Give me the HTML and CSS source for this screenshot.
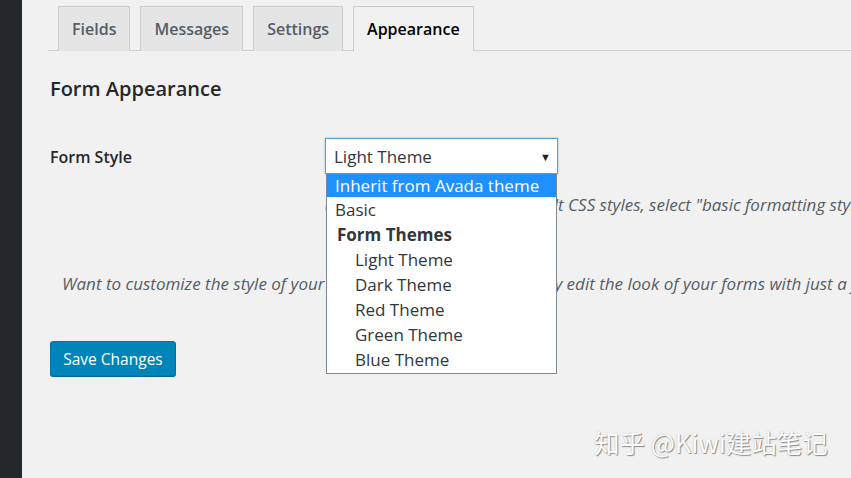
FILE: index.html
```html
<!DOCTYPE html>
<html>
<head>
<meta charset="utf-8">
<link rel="stylesheet" href="styles.css">
</head>
<body>
<div class="page">
  <aside class="sidebar"></aside>
  <main class="main">
    <nav class="tabs">
      <span class="tab">Fields</span>
      <span class="tab">Messages</span>
      <span class="tab">Settings</span>
      <span class="tab active">Appearance</span>
    </nav>
    <h2 class="title">Form Appearance</h2>
    <div class="row">
      <div class="label">Form Style</div>
      <div class="field">
        <div class="select-wrap">
          <div class="select"><span>Light Theme</span><span class="arrow">▼</span></div>
          <ul class="dropdown">
            <li class="opt selected">Inherit from Avada theme</li>
            <li class="opt">Basic</li>
            <li class="group">Form Themes</li>
            <li class="opt sub">Light Theme</li>
            <li class="opt sub">Dark Theme</li>
            <li class="opt sub">Red Theme</li>
            <li class="opt sub">Green Theme</li>
            <li class="opt sub">Blue Theme</li>
          </ul>
        </div>
        <p class="desc">(If you want to avoid the default CSS styles, select "basic formatting styles" from the list.)</p>
      </div>
    </div>
    <p class="note">Want to customize the style of your forms? Try our plugins to easily edit the look of your forms with just a few clicks.</p>
    <button class="save">Save Changes</button>
    <div class="watermark">知乎 @Kiwi建站笔记</div>
  </main>
</div>
</body>
</html>
```
FILE: styles.css
```css
html, body {
  margin: 0;
  padding: 0;
  width: 851px;
  height: 478px;
  overflow: hidden;
  background: #f1f1f1;
  font-family: "Open Sans", "Noto Sans", sans-serif;
  color: #23282d;
}
.page {
  display: flex;
  height: 478px;
}
.sidebar {
  width: 22px;
  flex: none;
  background: #23282d;
}
.main {
  flex: 1;
  padding-left: 26px;
  min-width: 0;
  position: relative;
}
.tabs {
  display: flex;
  gap: 10px;
  padding: 6px 0 0 10px;
  border-bottom: 1px solid #cccccc;
  height: 44px;
}
.tab {
  box-sizing: border-box;
  height: 45px;
  padding: 0 13px;
  border: 1px solid #cccccc;
  border-bottom: none;
  background: #e5e5e5;
  color: #555d66;
  font-size: 16px;
  font-weight: 600;
  line-height: 44px;
}
.tab.active {
  background: #f1f1f1;
  color: #000;
  height: 45px;
  margin-bottom: -1px;
}
.title {
  margin: 24px 0 0 2px;
  font-size: 20px;
  font-weight: 600;
  line-height: 28px;
}
.row {
  display: flex;
  margin-top: 35px;
  padding-left: 2px;
}
.label {
  flex: none;
  width: 275px;
  padding-top: 2px;
  font-size: 16px;
  font-weight: 600;
  line-height: 35px;
}
.field {
  min-width: 0;
}
.select-wrap {
  position: relative;
  width: 233px;
}
.select {
  box-sizing: border-box;
  height: 36px;
  border: 1px solid #5b9dd9;
  background: #fff;
  display: flex;
  justify-content: space-between;
  align-items: center;
  padding: 0 6px 0 8px;
  font-size: 17px;
  color: #32373c;
  box-shadow: 0 0 2px rgba(30,140,190,0.5);
}
.arrow {
  font-size: 11px;
  color: #222;
}
.dropdown {
  position: absolute;
  left: 1px;
  top: 36px;
  width: 231px;
  box-sizing: border-box;
  margin: 0;
  padding: 0;
  list-style: none;
  background: #fff;
  border: 1px solid #7e8993;
  border-top: none;
  height: 200px;
  overflow: hidden;
  z-index: 5;
  font-size: 17px;
}
.dropdown li {
  height: 25px;
  line-height: 24px;
  padding-left: 8px;
  color: #32373c;
  white-space: nowrap;
}
.dropdown li.selected {
  background: #1e90ff;
  color: #fff;
  height: 23px;
  line-height: 23px;
  margin-bottom: 1px;
}
.dropdown li.group {
  font-weight: 700;
  padding-left: 10px;
}
.dropdown li.sub {
  padding-left: 28px;
}
.desc {
  margin: 20px 0 0 0;
  white-space: nowrap;
  font-style: italic;
  font-size: 17px;
  color: #555d66;
  line-height: 22px;
}
.note {
  margin: 57px 0 0 14px;
  white-space: nowrap;
  font-style: italic;
  font-size: 17px;
  color: #555d66;
  line-height: 22px;
}
.save {
  margin: 46px 0 0 2px;
  box-sizing: border-box;
  width: 126px;
  height: 35px;
  background: #0085ba;
  border: 1px solid #0073aa;
  border-radius: 3px;
  box-shadow: 0 1px 0 #006799;
  color: #fff;
  font-family: "Open Sans", "Noto Sans", sans-serif;
  font-size: 15.5px;
  padding: 0;
}
.watermark {
  position: absolute;
  left: 572px;
  top: 423px;
  font-family: "Noto Sans CJK SC", "Noto Sans", sans-serif;
  font-size: 25.5px;
  color: #ffffff;
  text-shadow: 1px 1px 1px #8a8a8a, 0 0 1px #aaa;
  white-space: nowrap;
}
```
